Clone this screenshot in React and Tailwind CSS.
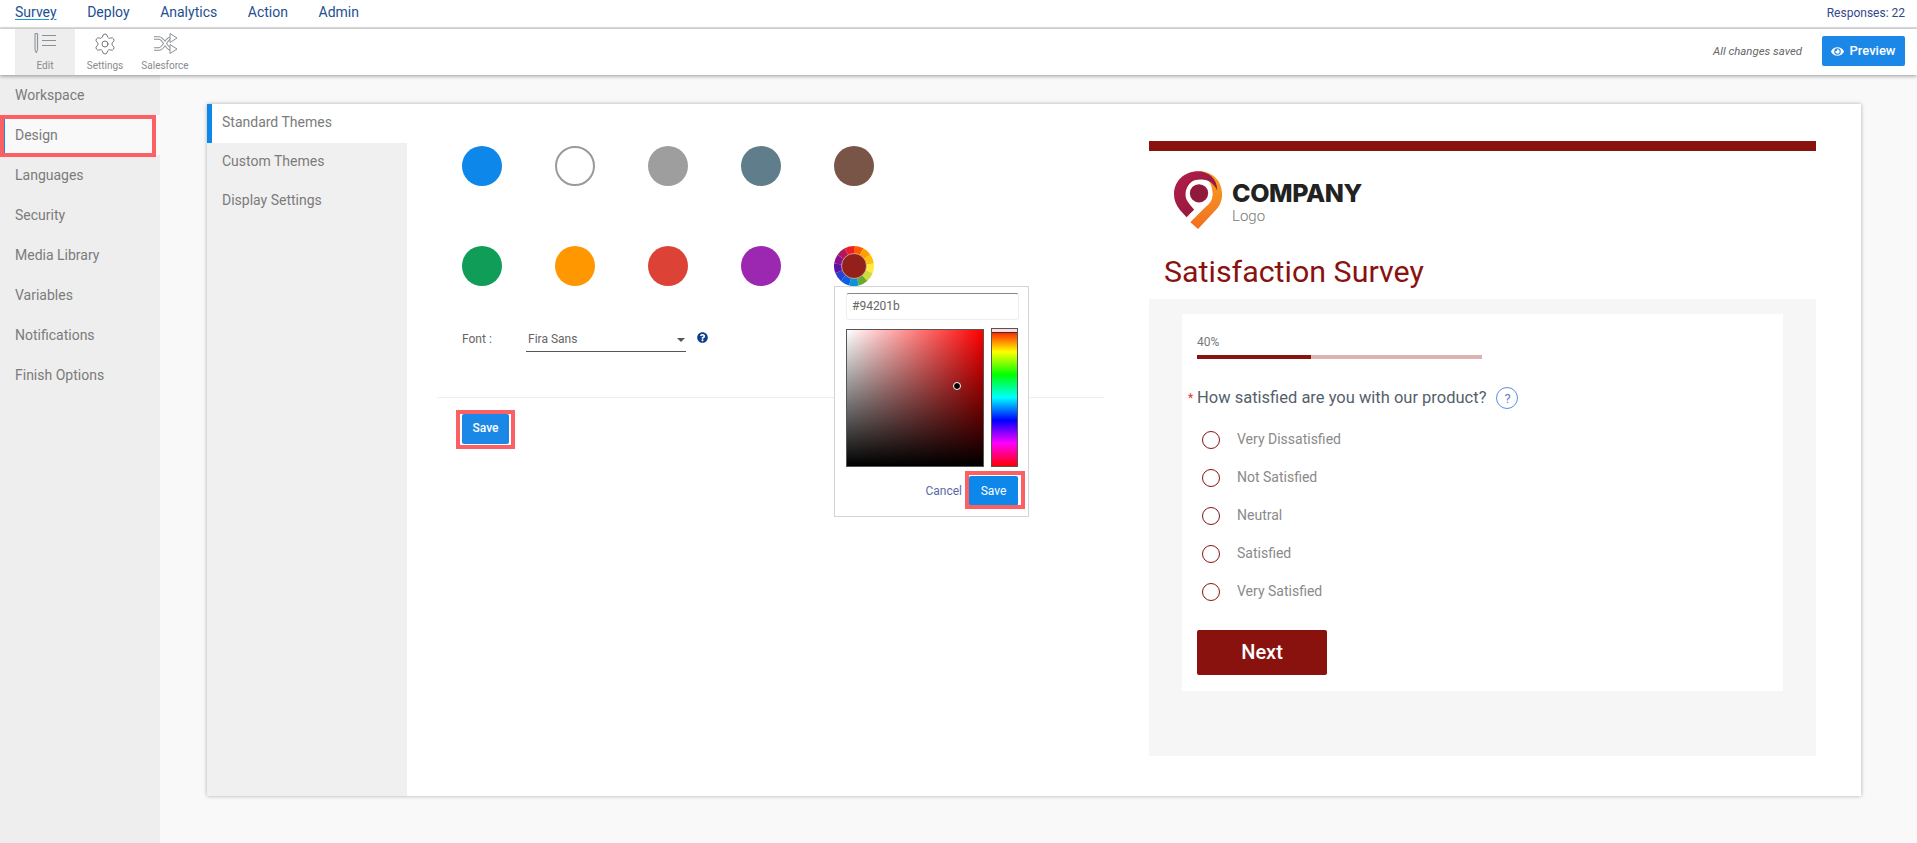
import React from "react";
import { Settings } from "lucide-react";
import { FaEye, FaQuestionCircle } from "react-icons/fa";

const nav = ["Survey", "Deploy", "Analytics", "Action", "Admin"];
const side = ["Workspace", "Design", "Languages", "Security", "Media Library", "Variables", "Notifications", "Finish Options"];
const row1 = ["bg-[#0d87ea]", "bg-white border-2 border-[#9a9a9a]", "bg-[#9e9e9e]", "bg-[#607d8b]", "bg-[#795548]"];
const row2 = ["bg-[#0f9d58]", "bg-[#ff9800]", "bg-[#dd4237]", "bg-[#9c27b0]"];
const answers = ["Very Dissatisfied", "Not Satisfied", "Neutral", "Satisfied", "Very Satisfied"];
const wheel = ["#ff5a00", "#ffa000", "#ffc107", "#ffeb3b", "#cddc39", "#6aa92f", "#0b93d6", "#0b5fe0", "#2b3fd0", "#5a12a8", "#8a1090", "#b0185c", "#ee1c25"];

function Wheel() {
  const n = wheel.length;
  const c = 20;
  const seg = wheel.map((col, i) => {
    const a = (i / n) * Math.PI * 2 - Math.PI / 2;
    const b = ((i + 1) / n) * Math.PI * 2 - Math.PI / 2;
    const d = `M${c} ${c}L${c + 20 * Math.cos(a)} ${c + 20 * Math.sin(a)}A20 20 0 0 1 ${c + 20 * Math.cos(b)} ${c + 20 * Math.sin(b)}Z`;
    return <path key={i} d={d} fill={col} />;
  });
  return (
    <svg width="40" height="40" viewBox="0 0 40 40" className="block">
      {seg}
      <circle cx="20" cy="20" r="12.5" fill="#94201b" stroke="#d8c8b8" strokeWidth="0.7" />
    </svg>
  );
}

function EditIcon() {
  return (
    <svg width="23" height="23" viewBox="0 0 23 23" fill="none" stroke="#8b8f96" strokeWidth="1">
      <path d="M1 1.5h2.6v16l-1.3 3.5-1.3-3.5z" fill="#e4e5e7" />
      <path d="M8 3.5h14M8 8.5h14M8 13.5h14" />
    </svg>
  );
}

function ShuffleIcon() {
  const p = "M1 6h5c5 0 7 11 12 11h2 M1 17h5c5 0 7-11 12-11h2";
  return (
    <svg width="25" height="23" viewBox="0 0 25 23" fill="none">
      <path d={p} stroke="#8b8f96" strokeWidth="3.4" />
      <path d={p} stroke="#ffffff" strokeWidth="1.6" />
      <path d="M17 1.5l7 4.5-7 4.5zM17 12.5l7 4.5-7 4.5z" fill="#fff" stroke="#8b8f96" strokeWidth="1" strokeLinejoin="round" />
    </svg>
  );
}

function Logo() {
  return (
    <svg width="50" height="60" viewBox="0 0 52 62">
      <defs>
        <linearGradient id="lg1" x1="0" y1="0" x2="1" y2="1">
          <stop offset="0" stopColor="#b31f4c" />
          <stop offset="1" stopColor="#8a1638" />
        </linearGradient>
        <linearGradient id="lg2" x1="0" y1="0" x2="0" y2="1">
          <stop offset="0" stopColor="#f7a11f" />
          <stop offset="1" stopColor="#f26f21" />
        </linearGradient>
      </defs>
      <path d="M26 0C40 0 50 10 50 24C50 32 47 37 42 42L25 60L17 53L32 37C37 33 40 29 40 23C40 12 33 3 24 1z" fill="url(#lg2)" />
      <path d="M25 0C36 0 45 8 45 20C40 10 32 8 26 9C17 10 12 17 12 24C12 30 15 33 21 40L13 48L6 40C2 35 0 30 0 24C0 10 11 0 25 0z" fill="url(#lg1)" />
      <path d="M25 9C34 9 40 16 40 24C40 31 37 34 32 38L21 49L16 45L26 36C20 37 13 31 13 23C13 15 18 9 25 9z" fill="#fff" />
      <circle cx="26" cy="23" r="9.5" fill="#8f1a3c" />
    </svg>
  );
}

function Mark({ className }) {
  return <div className={"absolute border-[4px] border-[#fb6064] pointer-events-none " + className} />;
}

export default function App() {
  return (
    <div className="h-[843px] w-full flex flex-col overflow-hidden bg-white font-['Roboto','Liberation_Sans',sans-serif] text-[#777]">
      <header className="h-[29px] shrink-0 flex items-center justify-between border-b-2 border-[#e2e2e2] pl-[15px] pr-[12px] pb-[2px]">
        <nav className="flex gap-[30.6px] text-[14px] text-[#1d4f91]">
          {nav.map((n, i) => (
            <span key={n} className={i === 0 ? "underline decoration-[#1b96d8] underline-offset-2" : ""}>{n}</span>
          ))}
        </nav>
        <span className="text-[12px] text-[#33478c]">Responses: 22</span>
      </header>
      <div className="relative z-10 h-[46px] shrink-0 flex items-center justify-between bg-white shadow-[0_1px_4px_rgba(0,0,0,0.4)] pl-[15px] pr-[12px]">
        <div className="flex h-full">
          <div className="w-[60px] h-full bg-[#eeeeee] flex flex-col items-center pt-[3px] text-[10px] text-[#8a8a8a]">
            <EditIcon />
            <span className="mt-[3px]">Edit</span>
          </div>
          <div className="w-[60px] h-full flex flex-col items-center pt-[3px] text-[10px] text-[#8a8a8a]">
            <Settings size={24} strokeWidth={0.9} color="#666" />
            <span className="mt-[2px]">Settings</span>
          </div>
          <div className="w-[60px] h-full flex flex-col items-center pt-[3px] text-[10px] text-[#8a8a8a]">
            <ShuffleIcon />
            <span className="mt-[3px]">Salesforce</span>
          </div>
        </div>
        <div className="flex items-center gap-[20px]">
          <span className="text-[11.4px] italic text-[#666]">All changes saved</span>
          <button className="h-[30px] w-[83px] -mt-[2px] rounded-[2px] bg-[#1b87e6] text-white text-[13px] font-medium flex items-center justify-center gap-[5px]">
            <FaEye size={13} /> Preview
          </button>
        </div>
      </div>
      <div className="flex flex-1 min-h-0">
        <aside className="relative w-[160px] shrink-0 bg-[#eeeeee] text-[14px] text-[#7b7b7b]">
          {side.map((s) => (
            <div key={s} className={"relative h-[40px] flex items-center pl-[15px] " + (s === "Design" ? "bg-[#f9f9f9] border-l-[5px] border-[#1b87e6] !pl-[10px]" : "")}>
              {s}
              {s === "Design" && <Mark className="left-[-5px] top-0 w-[156px] h-[42px]" />}
            </div>
          ))}
        </aside>
        <main className="flex-1 min-w-0 bg-[#f9f9f9] pt-[29px] pl-[47px] pr-[56px] pb-[47px]">
          <div className="h-full flex bg-white shadow-[0_0_4px_rgba(0,0,0,0.3)]">
            <div className="w-[200px] shrink-0 bg-[#f0f0f0] text-[14px] text-[#7b7b7b]">
              <div className="h-[39px] flex items-center bg-white border-l-[5px] border-[#0d87ea] pl-[10px] pb-[2px] w-[210px] relative">Standard Themes</div>
              <div className="h-[39px] flex items-center pl-[15px] pb-[2px]">Custom Themes</div>
              <div className="h-[39px] flex items-center pl-[15px] pb-[2px]">Display Settings</div>
            </div>
            <section className="w-[742px] shrink-0 pl-[30px] pt-[42px] relative">
              <div className="flex gap-[53px] pl-[25px]">
                {row1.map((c, i) => <div key={i} className={"w-[40px] h-[40px] rounded-full box-border " + c} />)}
              </div>
              <div className="flex gap-[53px] pl-[25px] mt-[60px]">
                {row2.map((c, i) => <div key={i} className={"w-[40px] h-[40px] rounded-full " + c} />)}
                <div className="relative">
                  <Wheel />
                  <div className="absolute z-20 left-0 top-[40px] w-[195px] h-[231px] bg-white border border-[#d4d4d4] box-border">
                    <div className="mt-[6px] ml-[11px] w-[173px] h-[27px] border border-[#eeeeee] border-t-[#888] rounded-[3px] flex items-center pl-[5px] pb-[2px] text-[12px] text-[#666]">#94201b</div>
                    <div className="flex gap-[7px] ml-[11px] mt-[9px]">
                      <div className="relative w-[138px] h-[138px] border border-[#555] bg-[linear-gradient(to_top,#000,transparent),linear-gradient(to_right,#fff,#f00)]">
                        <div className="absolute left-[106px] top-[52px] w-[6px] h-[6px] rounded-full bg-black border border-white box-content" />
                      </div>
                      <div className="relative w-[27px] h-[139px] border border-[#555] -mt-[1px] bg-[linear-gradient(to_bottom,#f00,#ff0,#0f0,#0ff,#00f,#f0f,#f00)]">
                        <div className="h-[4px] bg-[#fdd] border-b border-[#333]" />
                      </div>
                    </div>
                    <div className="flex justify-end items-center mt-[9px] pr-[10px] gap-[7px] text-[12px] text-[#5a6aa8]">
                      <span>Cancel</span>
                      <div className="relative">
                        <button className="block w-[49px] h-[30px] rounded-[2px] bg-[#0d87ea] text-white text-[12px]">Save</button>
                        <Mark className="-left-[4px] -top-[5px] -right-[7px] -bottom-[3px]" />
                      </div>
                    </div>
                  </div>
                </div>
              </div>
              <div className="flex items-center mt-[40px] ml-[25px] text-[12px] text-[#666]">
                <span className="w-[64px]">Font :</span>
                <div className="w-[160px] h-[26px] border-b border-[#555] flex items-center justify-between pl-[2px] pr-[0px]">
                  <span>Fira Sans</span>
                  <span className="w-0 h-0 border-x-[4px] border-x-transparent border-t-[4px] border-t-[#555] mt-[3px] mr-[1px]" />
                </div>
                <FaQuestionCircle size={11} color="#0f3f8c" className="ml-[11px] -mt-[4px]" />
              </div>
              <div className="h-px bg-[#eeeeee] mt-[45px] w-[667px]" />
              <div className="relative inline-block ml-[25px] mt-[16px]">
                <button className="w-[47px] h-[30px] rounded-[2px] bg-[#1b87e6] text-white text-[12px] font-medium block pb-[2px]">Save</button>
                <Mark className="-left-[6px] -top-[4px] -right-[6px] -bottom-[5px]" />
              </div>
            </section>
            <section className="w-[667px] shrink-0 pt-[37px] flex flex-col">
              <div className="h-[10px] bg-[#89120f]" />
              <div className="flex items-start pl-[25px] pt-[20px] h-[100px] gap-[8px]">
                <Logo />
                <div className="flex flex-col pt-[9px]">
                  <span className="text-[25px] leading-[26px] font-extrabold text-[#222] font-['Inter',sans-serif] tracking-[-0.4px]">COMPANY</span>
                  <span className="text-[15px] leading-[21px] text-[#777] font-light">Logo</span>
                </div>
              </div>
              <h1 className="h-[48px] flex items-center pl-[15px] pb-[6px] text-[30.4px] font-normal text-[#89120f]">Satisfaction Survey</h1>
              <div className="h-[457px] bg-[#f6f6f6] pt-[15px] px-[33px]">
                <div className="h-[377px] bg-white pt-[20px] px-[15px]">
                  <div className="text-[12px] leading-[16px] text-[#777]">40%</div>
                  <div className="w-[285px] h-[4px] mt-[5px] bg-[#dcb3b3]"><div className="w-[114px] h-full bg-[#89120f]" /></div>
                  <div className="flex items-center mt-[27px] -ml-[9px] text-[16.5px] text-[#555f6b]">
                    <span className="text-[#d33] text-[12px] w-[9px]">*</span>
                    <span>How satisfied are you with our product?</span>
                    <span className="ml-[10px] w-[22px] h-[22px] rounded-full border border-[#5b8fe8] flex items-center justify-center text-[13px] text-[#5b7fc4]">?</span>
                  </div>
                  <div className="mt-[10px] flex flex-col">
                    {answers.map((a) => (
                      <div key={a} className="h-[38px] flex items-center pl-[5px] text-[14px] text-[#8a8a8a]">
                        <span className="w-[18px] h-[18px] rounded-full border border-[#89120f] mr-[17px]" />
                        {a}
                      </div>
                    ))}
                  </div>
                  <button className="block mt-[19px] w-[130px] h-[45px] rounded-[2px] bg-[#89120f] text-white text-[20px] font-medium">Next</button>
                </div>
              </div>
            </section>
          </div>
        </main>
      </div>
    </div>
  );
}
